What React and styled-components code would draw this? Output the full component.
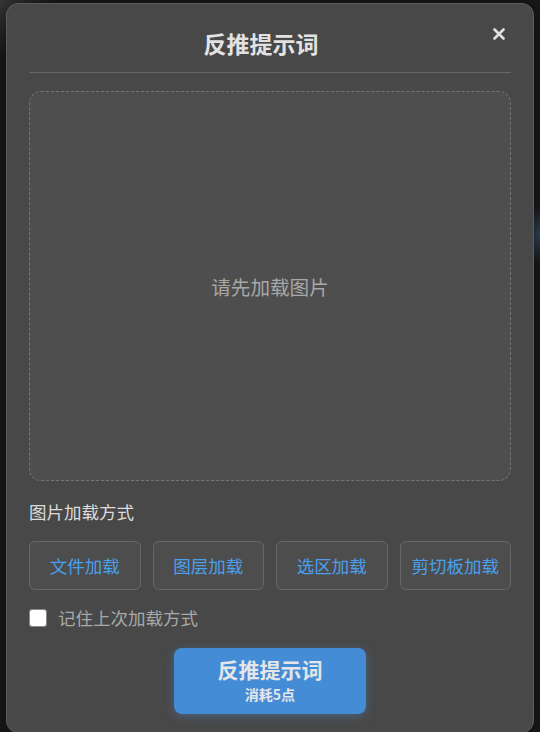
import React from "react";
import styled, { createGlobalStyle } from "styled-components";

const GlobalStyle = createGlobalStyle`
    html, body {
        margin: 0;
        padding: 0;
        height: 100%;
    }
    body {
        background:
            radial-gradient(circle at 100% 32%, rgba(70, 110, 150, 0.55) 0, rgba(70, 110, 150, 0) 30px),
            radial-gradient(circle at 0 0, #3a3a3a 0, rgba(40, 40, 40, 0) 60px),
            #1a1a1a;
        font-family: "Noto Sans CJK SC", "Noto Sans", sans-serif;
        overflow: hidden;
    }
`;

const Modal = styled.div`
    box-sizing: border-box;
    width: 528px;
    margin: 3px auto 0;
    padding: 23px 22px 18px;
    background: #484848;
    border: 1px solid #5c5c5c;
    border-radius: 12px;
    box-shadow: 0 0 24px rgba(0, 0, 0, 0.6);
`;

const Header = styled.div`
    display: flex;
    align-items: flex-start;
    padding-bottom: 13px;
    border-bottom: 1px solid #686868;
`;

const Title = styled.h2`
    flex: 1;
    margin: 0;
    text-align: center;
    font-size: 23px;
    line-height: 32px;
    font-weight: 700;
    color: #e2e2e2;
`;

const CloseButton = styled.button`
    width: 18px;
    height: 14px;
    padding: 0;
    border: none;
    background: none;
    display: flex;
    align-items: center;
    justify-content: flex-start;
    cursor: pointer;
`;

const DropZone = styled.div`
    box-sizing: border-box;
    height: 390px;
    margin-top: 18px;
    border: 1px dashed #767676;
    border-radius: 12px;
    background: #4e4e4e;
    display: flex;
    align-items: center;
    justify-content: center;
    font-size: 19.6px;
    color: #a8a8a8;
`;

const SectionLabel = styled.div`
    margin-top: 19px;
    font-size: 17.5px;
    line-height: 24px;
    color: #dcdcdc;
`;

const ButtonRow = styled.div`
    display: grid;
    grid-template-columns: repeat(4, 1fr);
    gap: 12px;
    margin-top: 17px;
`;

const LoadButton = styled.button`
    box-sizing: border-box;
    height: 49px;
    padding: 0;
    border: 1px solid #676767;
    border-radius: 6px;
    background: #4d4d4d;
    color: #4aa0ec;
    font-family: inherit;
    font-size: 17.5px;
    cursor: pointer;
`;

const CheckRow = styled.label`
    display: flex;
    align-items: center;
    gap: 11px;
    margin-top: 18px;
    font-size: 17.5px;
    line-height: 20px;
    color: #a9a9a9;
`;

const CheckBox = styled.input`
    appearance: none;
    box-sizing: border-box;
    width: 18px;
    height: 18px;
    margin: 0;
    background: #ffffff;
    border: 1px solid #8a8a8a;
    border-radius: 3px;
`;

const Footer = styled.div`
    display: flex;
    justify-content: center;
    margin-top: 20px;
`;

const SubmitButton = styled.button`
    box-sizing: border-box;
    width: 192px;
    height: 66px;
    padding: 0;
    border: none;
    border-radius: 8px;
    background: #448cd6;
    box-shadow: 0 2px 10px rgba(80, 150, 230, 0.35);
    color: #e4e6ea;
    font-family: inherit;
    font-weight: 700;
    display: flex;
    flex-direction: column;
    align-items: center;
    justify-content: center;
    cursor: pointer;
`;

const SubmitMain = styled.span`
    font-size: 21px;
    line-height: 26px;
`;

const SubmitCost = styled.span`
    font-size: 14px;
    line-height: 25px;
`;

const loadModes = ["文件加载", "图层加载", "选区加载", "剪切板加载"];

const App = () => (
    <>
        <GlobalStyle />
        <Modal>
            <Header>
                <Title>反推提示词</Title>
                <CloseButton aria-label="关闭">
                    <svg width="12" height="12" viewBox="0 0 12 12">
                        <path d="M1.5 1.5 L10.5 10.5 M10.5 1.5 L1.5 10.5" stroke="#e0e0e0" strokeWidth="2.6" strokeLinecap="round" />
                    </svg>
                </CloseButton>
            </Header>

            <DropZone>请先加载图片</DropZone>

            <SectionLabel>图片加载方式</SectionLabel>
            <ButtonRow>
                {loadModes.map((mode) => (
                    <LoadButton key={mode}>{mode}</LoadButton>
                ))}
            </ButtonRow>

            <CheckRow>
                <CheckBox type="checkbox" />
                记住上次加载方式
            </CheckRow>

            <Footer>
                <SubmitButton>
                    <SubmitMain>反推提示词</SubmitMain>
                    <SubmitCost>消耗5点</SubmitCost>
                </SubmitButton>
            </Footer>
        </Modal>
    </>
);

export default App;
